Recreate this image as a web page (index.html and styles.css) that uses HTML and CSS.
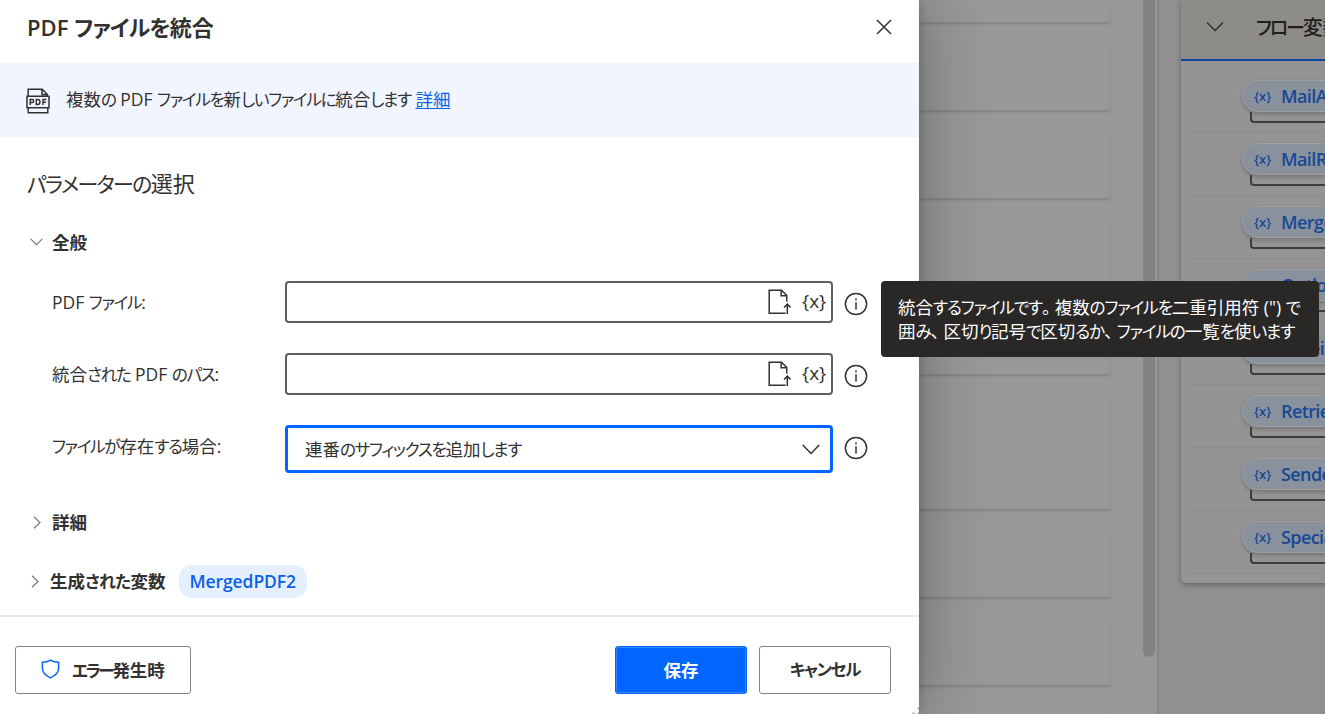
FILE: index.html
```html
<!DOCTYPE html>
<html lang="ja">
<head>
    <meta charset="UTF-8">
    <meta name="viewport" content="width=device-width, initial-scale=1">
    <title>PDF ファイルを統合</title>
    <link rel="stylesheet" href="styles.css">
</head>
<body>

<svg class="defs">
    <symbol id="i-file" viewBox="0 0 24 26">
        <path d="M17.600 24.200H1.200V1.200h12.300l5.300 5.300v6M13.200 1.500v5.300h5.400M19.300 25V15.600M16 18.600l3.300-3.400 3.300 3.400"/>
    </symbol>
    <symbol id="i-info" viewBox="0 0 24 24">
        <circle cx="12" cy="12" r="10.6"/>
        <path d="M12 10.2v7.3M12 6.5v2"/>
    </symbol>
</svg>

<!-- designer behind the dialog -->
<div class="app">
    <div class="workspace">
        <div class="actions">
            <div class="action first"></div>
            <div class="action"></div>
            <div class="action"></div>
            <div class="action"></div>
            <div class="action"></div>
            <div class="action tall"></div>
            <div class="action"></div>
            <div class="action"></div>
            <div class="action"></div>
        </div>
        <div class="scroll"></div>
    </div>
    <div class="side">
        <div class="variables">
            <div class="variables-head">
                <svg width="18" height="12" viewBox="0 0 18 12"><path d="M1 1.5l8 8 8-8"/></svg>
                <span><span class="k">フロー</span>変数</span>
            </div>
            <div class="row"><div class="chip"><i>{x}</i>MailAttachments</div></div>
            <div class="row"><div class="chip"><i>{x}</i>MailReceived</div></div>
            <div class="row"><div class="chip"><i>{x}</i>MergedPDF</div></div>
            <div class="row"><div class="chip"><i>{x}</i>OutlookInstance</div></div>
            <div class="row"><div class="chip"><i>{x}</i>ReceivedDate</div></div>
            <div class="row"><div class="chip"><i>{x}</i>RetrievedEmails</div></div>
            <div class="row"><div class="chip"><i>{x}</i>SenderName</div></div>
            <div class="row"><div class="chip"><i>{x}</i>SpecialFolderPath</div></div>
        </div>
    </div>
</div>

<div class="dialog">
    <div class="title">
        <h1>PDF <span class="k">ファイルを</span>統合</h1>
        <svg width="16" height="16" viewBox="0 0 16 16"><path d="M1 1l14 14M15 1L1 15"/></svg>
    </div>

    <div class="banner">
        <svg width="24" height="26" viewBox="0 0 24 26">
            <path d="M2.200 8V1.200h14l5 5V8M16 1.200v5.200h5.200M1 8.200h22v11.600H1zM2.200 20v4.800h19.600V20"/>
            <path class="pdf" d="M4.200 17v-5.500h2a1.500 1.500 0 0 1 0 3h-2M10.300 11.500v5h1.200a2.500 2.500 0 0 0 0-5zM17 17v-5.500h3.400M17 14.300h2.800"/>
        </svg>
        <p>複数<span class="k">の</span> PDF <span class="k">ファイルを</span>新<span class="k">しいファイルに</span>統合<span class="k">します</span> <a href="#">詳細</a></p>
    </div>

    <div class="content">
        <h2><span class="k">パラメーターの</span>選択</h2>

        <div class="group">
            <svg width="13" height="8" viewBox="0 0 13 8"><path d="M.7.8l5.800 5.800L12.300.8"/></svg>
            <b>全般</b>
        </div>

        <div class="field">
            <label>PDF <span class="k">ファイル</span>:</label>
            <div class="input">
                <svg class="file"><use href="#i-file"/></svg>
                <span class="var">{x}</span>
            </div>
            <svg class="info"><use href="#i-info"/></svg>
        </div>
        <div class="field">
            <label>統合<span class="k">された</span> PDF <span class="k">のパス</span>:</label>
            <div class="input">
                <svg class="file"><use href="#i-file"/></svg>
                <span class="var">{x}</span>
            </div>
            <svg class="info"><use href="#i-info"/></svg>
        </div>
        <div class="field">
            <label><span class="k">ファイルが</span>存在<span class="k">する</span>場合:</label>
            <div class="input select">
                <span class="value">連番<span class="k">のサフィックスを</span>追加<span class="k">します</span></span>
                <svg width="18" height="11" viewBox="0 0 18 11"><path d="M.8 1l8.200 8.500L17.200 1"/></svg>
            </div>
            <svg class="info"><use href="#i-info"/></svg>
        </div>

        <div class="group more">
            <svg width="8" height="13" viewBox="0 0 8 13"><path d="M1 .7l6 5.800-6 5.800"/></svg>
            <b>詳細</b>
        </div>
        <div class="group generated">
            <svg width="8" height="13" viewBox="0 0 8 13"><path d="M1 .7l6 5.800-6 5.800"/></svg>
            <b>生成<span class="k">された</span>変数</b>
            <span class="pill">MergedPDF2</span>
        </div>
    </div>

    <div class="footer">
        <div class="btn error">
            <svg width="19" height="20" viewBox="0 0 19 20"><path d="M9.500 1.200C7 2.800 4.300 3.300 1.400 3.300v6c0 4.500 3.400 7.500 8.100 9.600 4.700-2.100 8.100-5.100 8.100-9.600v-6C14.700 3.300 12 2.800 9.500 1.200z"/></svg>
            <span><span class="k">エラー</span>発生時</span>
        </div>
        <div class="btn save"><span>保存</span></div>
        <div class="btn cancel"><span class="k">キャンセル</span></div>
    </div>
    <div class="grip"></div>
</div>

<div class="tooltip">
    統合<span class="k">するファイルです</span><span class="p">。</span>複数<span class="k">のファイルを</span>二重引用符 (") <span class="k">で</span><br>
    囲<span class="k">み</span><span class="p">、</span>区切<span class="k">り</span>記号<span class="k">で</span>区切<span class="k">るか</span><span class="p">、</span><span class="k">ファイルの</span>一覧<span class="k">を</span>使<span class="k">います</span>
</div>

</body>
</html>
```

FILE: styles.css
```css
* {
    box-sizing: border-box;
}
body {
    margin: 0;
    height: 714px;
    overflow: hidden;
    position: relative;
    background-color: #989898;
    color: #323130;
    font-family: "Open Sans", "Noto Sans CJK JP", sans-serif;
    font-size: 17.5px;
    font-feature-settings: "palt";
    white-space: nowrap;
}
h1, h2, p {
    margin: 0;
}
svg {
    display: block;
    flex: none;
    fill: none;
    stroke: #323130;
    stroke-width: 1.5;
}
.defs {
    position: absolute;
    width: 0;
    height: 0;
}
/* narrow kana */
.k {
    font-size: .95em;
    letter-spacing: -.077em;
}

/* Designer */
.app {
    display: flex;
    height: 714px;
    overflow: hidden;
}
.workspace {
    width: 1159px;
    flex: none;
    display: flex;
    justify-content: flex-end;
    background-color: #989898;
    border-right: 2px solid #878787;
}
.actions {
    width: 1110px;
    height: 714px;
    overflow: hidden;
    margin-right: 32px;
    padding-right: 1px;
}
.action {
    height: 66px;
    margin-bottom: 22px;
    border-radius: 3px;
    background-color: #989898;
    box-shadow: 0 2px 3px rgba(0, 0, 0, 0.15);
}
.action.first {
    height: 22px;
}
.action.tall {
    height: 113px;
}
.scroll {
    width: 12px;
    height: 657px;
    flex: none;
    margin-right: 2px;
    background-color: #858380;
    border-radius: 0 0 6px 6px;
}
.side {
    flex: 1;
    padding-left: 22px;
    background-color: #909090;
    overflow: hidden;
}
.variables {
    width: 300px;
    height: 583px;
    background-color: #949494;
    border-radius: 0 0 5px 5px;
    box-shadow: 0 2px 5px rgba(0, 0, 0, 0.3);
}
.variables-head {
    height: 61px;
    display: flex;
    align-items: center;
    padding: 0 0 6px 25px;
    gap: 32px;
    background-color: #8e8c89;
    border-bottom: 2px solid #0d479f;
    font-size: 20px;
    font-weight: 500;
    color: #1f1e1d;
}
.variables-head .k {
    letter-spacing: -.11em;
}
.row {
    height: 63px;
    margin-left: 6px;
    padding: 10px 0 0 55px;
    border-bottom: 1px solid #8d8d8d;
}
.variables-head + .row {
    height: 72px;
    padding-top: 19px;
}
.chip {
    position: relative;
    width: 200px;
    height: 32px;
    line-height: 30px;
    padding-left: 11px;
    border: 1px solid #9f9f9f;
    border-radius: 16px;
    background-color: #89919d;
    box-shadow: 0 2px 4px rgba(0, 0, 0, 0.22);
    color: #174896;
    font-size: 18px;
    font-weight: 550;
    letter-spacing: -.6px;
}
.chip::after {
    content: "";
    position: absolute;
    left: 7px;
    top: 31px;
    width: 180px;
    height: 9px;
    border: 2px solid #3c3c3b;
    border-top: 0;
    border-radius: 0 0 0 4px;
}
.chip i {
    display: inline-block;
    width: 27px;
    font-style: normal;
    font-size: 13px;
    letter-spacing: 0;
    vertical-align: 2px;
}

/* Dialog */
.dialog {
    position: absolute;
    left: 0;
    top: 0;
    width: 919px;
    height: 714px;
    background-color: #fff;
    box-shadow: 0 0 60px rgba(0, 0, 0, 0.32), 0 0 8px rgba(0, 0, 0, 0.2);
}
.title {
    height: 63px;
    display: flex;
    justify-content: space-between;
    padding: 0 27px;
}
.title h1 {
    font-size: 22px;
    line-height: 54px;
    font-weight: 600;
}
.title h1 .k {
    font-size: 1em;
    letter-spacing: -.8px;
}
.title svg {
    margin-top: 19px;
}
.banner {
    height: 74px;
    display: flex;
    align-items: center;
    padding-left: 26px;
    gap: 16px;
    background-color: #f1f5ff;
}
.banner svg {
    margin-top: 2px;
}
.banner p {
    line-height: 72px;
    height: 74px;
}
.banner .pdf {
    stroke-width: 1.4;
}
a {
    color: #0b63e5;
    text-underline-offset: 2px;
}
.content {
    height: 478px;
    padding-top: 27px;
}
.content h2 {
    margin-left: 27px;
    font-size: 22px;
    font-weight: 400;
    line-height: 38px;
}
.group {
    display: flex;
    align-items: center;
    height: 30px;
    margin-top: 24px;
    padding-left: 30px;
    gap: 9px;
}
.group svg {
    stroke: #777;
    stroke-width: 1.2;
}
.group b {
    font-weight: 700;
    margin-top: -2px;
}
.group b .k {
    letter-spacing: -.03em;
}
.field {
    display: flex;
    height: 42px;
    margin-top: 30px;
    padding-left: 52px;
}
.group + .field {
    margin-top: 24px;
}
.field label {
    width: 233px;
    line-height: 42px;
}
.input {
    display: flex;
    align-items: center;
    justify-content: flex-end;
    width: 548px;
    height: 42px;
    border: 2px solid #605e5c;
    border-radius: 4px;
}
.file {
    width: 24px;
    height: 26px;
    margin-right: 10px;
}
.var {
    width: 29px;
    font-size: 19px;
    line-height: 34px;
    margin-bottom: 2px;
}
.select {
    height: 48px;
    border: 3px solid #0066ff;
    justify-content: space-between;
    padding: 0 10px 0 17px;
}
.value {
    margin-top: -2px;
}
.info {
    width: 24px;
    height: 24px;
    margin: 11px 0 0 11px;
}
.group.more {
    margin-top: 40px;
    padding-left: 33px;
    gap: 11px;
}
.group.generated {
    margin-top: 29px;
    padding-left: 31px;
    gap: 11px;
}
.pill {
    height: 33px;
    margin-left: 2px;
    padding: 0 11px;
    line-height: 32px;
    border-radius: 13px;
    background-color: #e5efff;
    color: #0b5fea;
    font-weight: 600;
    letter-spacing: -.1px;
}

/* Footer */
.footer {
    display: flex;
    height: 99px;
    padding: 29px 28px 0 15px;
    border-top: 2px solid #eaeaea;
}
.btn {
    display: flex;
    align-items: center;
    justify-content: center;
    width: 132px;
    height: 48px;
    padding-bottom: 2px;
    border: 1px solid #858483;
    border-radius: 3px;
    font-weight: 600;
}
.error {
    width: 176px;
    gap: 12px;
    margin-right: auto;
}
.error svg {
    stroke: #0b66f5;
}
.error .k {
    letter-spacing: -.14em;
}
.save {
    background-color: #0066ff;
    border-color: #0066ff;
    box-shadow: inset 0 0 0 1px #3385ff;
    color: #fff;
    margin-right: 12px;
}
.grip {
    position: absolute;
    right: 0;
    bottom: 0;
    width: 8px;
    height: 8px;
    background: radial-gradient(circle, #b5bccb 1px, transparent 1.5px) 0 0 / 5px 5px;
    clip-path: polygon(100% 0, 100% 100%, 0 100%);
}

/* Help for the first field */
.tooltip {
    position: absolute;
    left: 881px;
    top: 281px;
    width: 438px;
    height: 76px;
    padding: 14px 17px;
    border-radius: 4px;
    background-color: #292827;
    color: #fff;
    line-height: 24px;
}
.tooltip .k {
    line-height: 1;
    letter-spacing: -.067em;
}
.tooltip .p {
    margin-right: 4px;
}
```
